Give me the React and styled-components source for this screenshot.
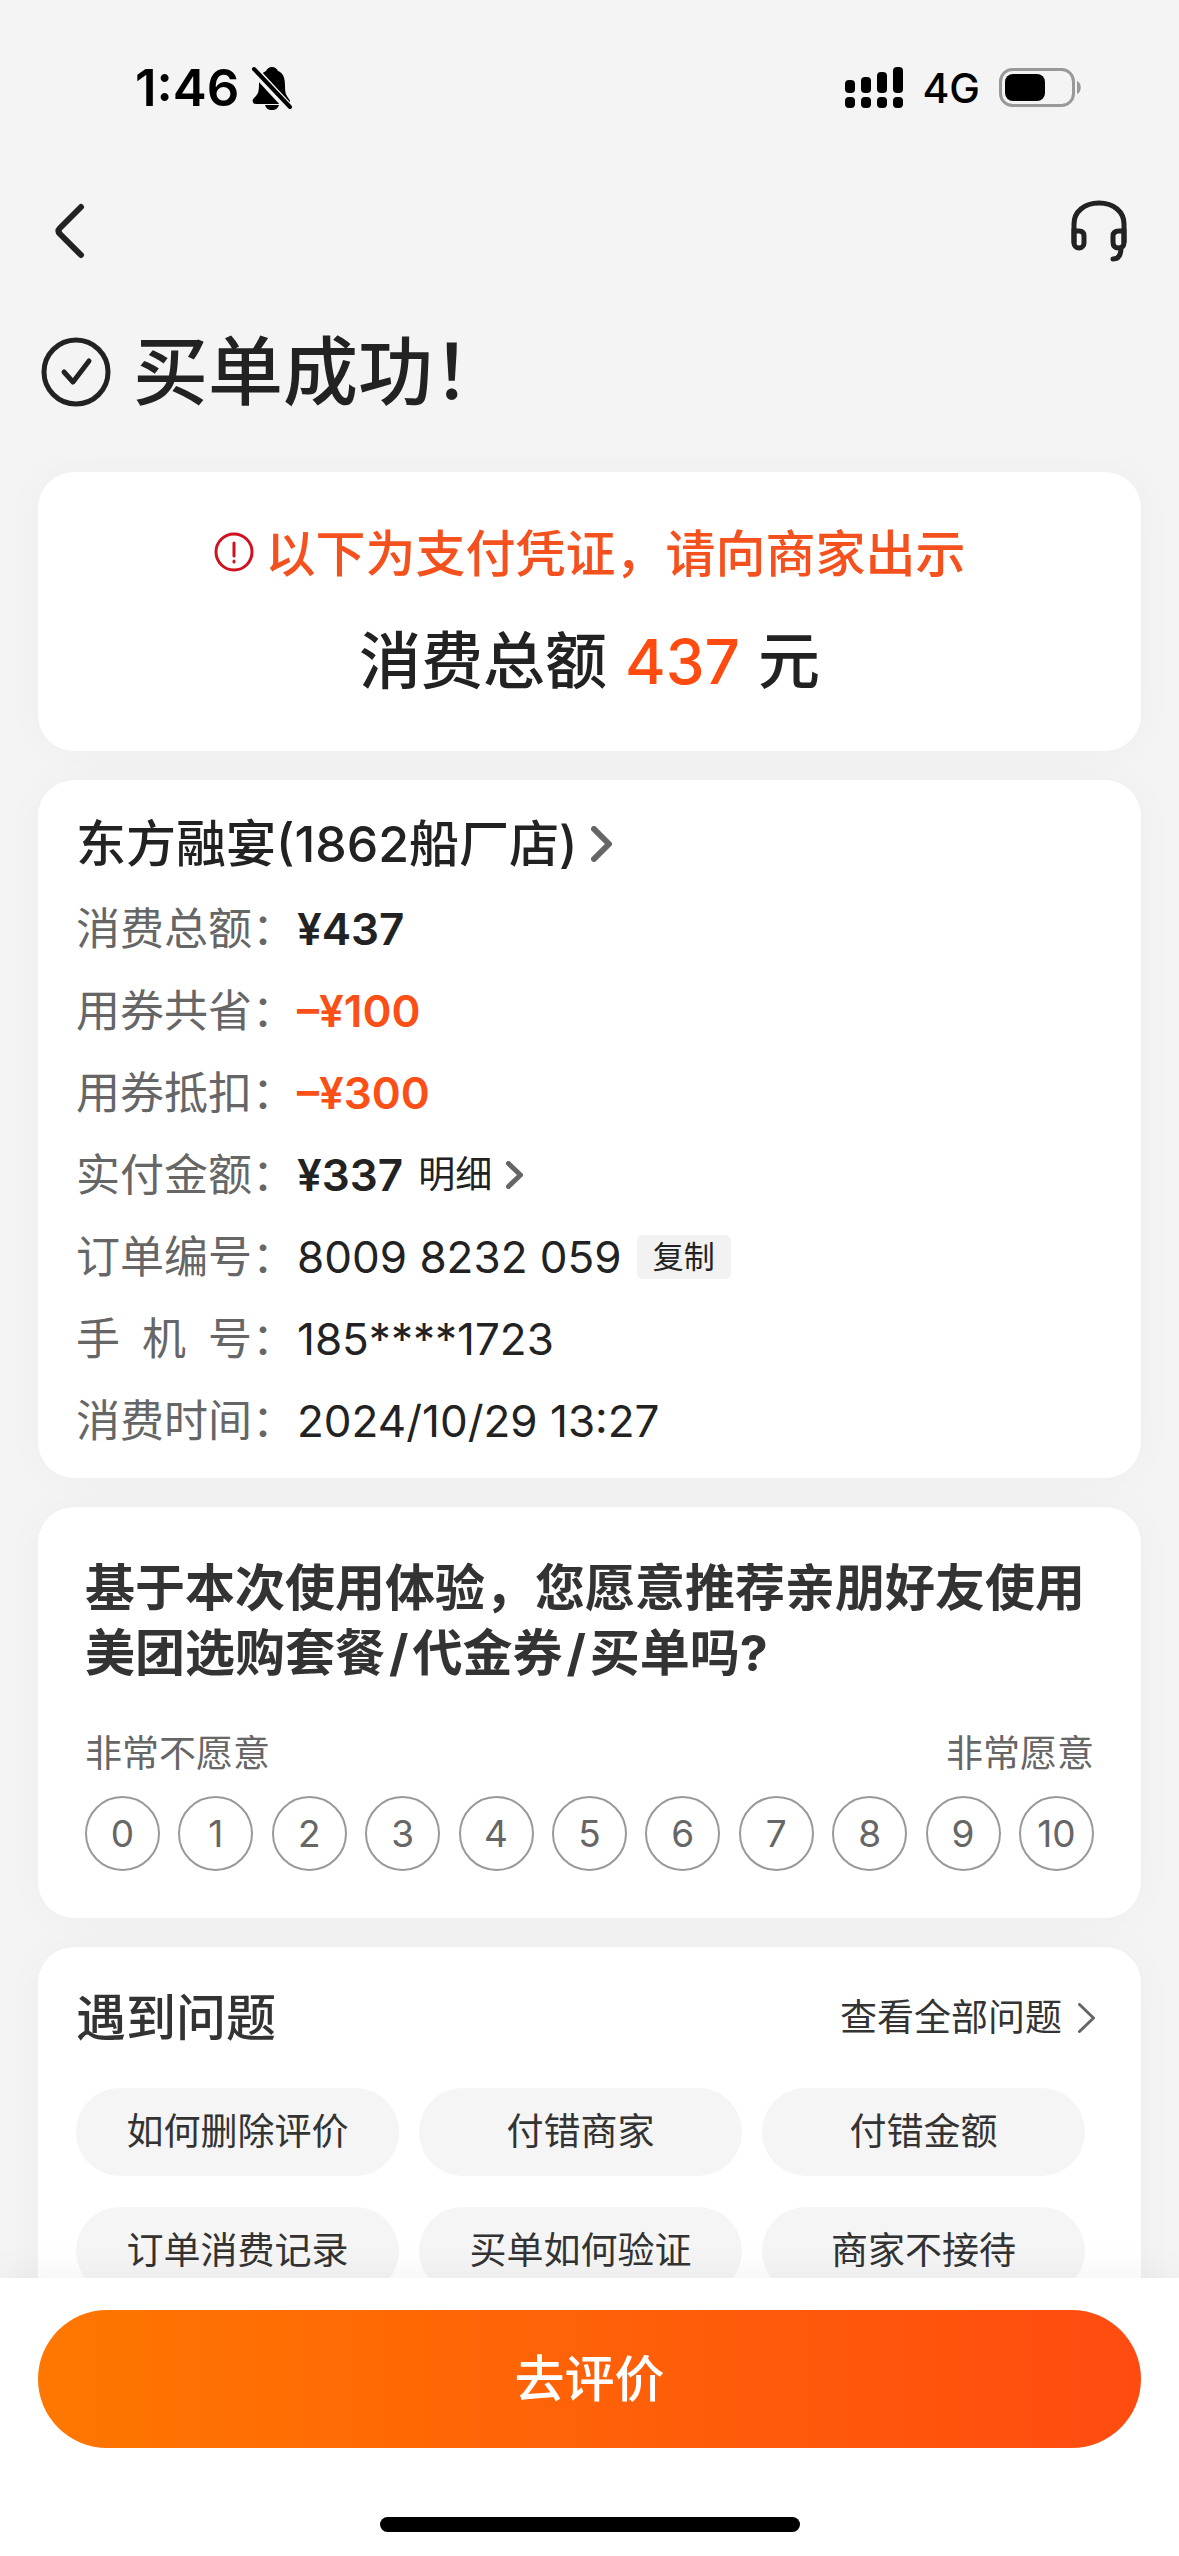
import React, { useState } from 'react';
import styled, { createGlobalStyle } from 'styled-components';

const GlobalStyle = createGlobalStyle`
    * {
        box-sizing: border-box;
    }
    body {
        margin: 0;
        background: #f4f4f4;
        color: #222;
        font-family: Inter, "Noto Sans CJK SC", sans-serif;
    }
    button {
        margin: 0;
        padding: 0;
        border: none;
        background: none;
        color: inherit;
        font-family: inherit;
        cursor: pointer;
    }
    a {
        color: inherit;
        text-decoration: none;
    }
`;

const Page = styled.div`
    display: flex;
    flex-direction: column;
    height: 100vh;
    overflow: hidden;
`;

const StatusBar = styled.header`
    flex: none;
    display: flex;
    align-items: center;
    justify-content: space-between;
    height: 176px;
    padding: 0 97px 0 135px;
    color: #000;
`;

const StatusGroup = styled.div`
    display: flex;
    align-items: center;
    gap: ${({ $gap }) => $gap}px;
`;

const Clock = styled.span`
    font-size: 51px;
    font-weight: 600;
    line-height: 60px;
`;

const Network = styled.span`
    font-size: 41px;
    font-weight: 500;
    line-height: 60px;
`;

const NavBar = styled.nav`
    flex: none;
    display: flex;
    align-items: center;
    justify-content: space-between;
    height: 110px;
    padding: 0 52px 0 46px;
`;

const IconButton = styled.button`
    display: flex;
    align-items: center;
    justify-content: center;
    height: 72px;
`;

const Result = styled.section`
    flex: none;
    display: flex;
    align-items: center;
    gap: 21px;
    height: 172px;
    padding: 0 40px;
`;

const ResultTitle = styled.h1`
    margin: 0;
    font-size: 75px;
    font-weight: 500;
    line-height: 100px;
`;

const Content = styled.main`
    flex: 1;
    min-height: 0;
    overflow: hidden;
    display: flex;
    flex-direction: column;
    gap: 29px;
    padding: 14px 38px 0;
`;

const Card = styled.section`
    flex: none;
    padding: ${({ $padding }) => $padding};
    border-radius: 36px;
    background: #fff;
    box-shadow: 0 0 40px rgba(0, 0, 0, 0.03);
`;

const Notice = styled.p`
    display: flex;
    align-items: center;
    justify-content: center;
    gap: 12px;
    margin: 0;
    color: #f4511e;
    font-size: 50px;
    font-weight: 500;
    line-height: 72px;
`;

const Total = styled.p`
    display: flex;
    align-items: center;
    justify-content: center;
    gap: 18px;
    margin: 28px 0 0;
    font-size: 62px;
    font-weight: 500;
    line-height: 88px;
    strong {
        color: #ff4b10;
        font-weight: 500;
    }
`;

const StoreLink = styled.a`
    display: flex;
    align-items: center;
    gap: 14px;
    font-size: 50px;
    font-weight: 500;
    line-height: 76px;
`;

const Details = styled.dl`
    display: grid;
    grid-template-columns: 221px 1fr;
    grid-auto-rows: 82px;
    align-items: center;
    margin: 6px 0 0;
    font-size: 44px;
    line-height: 60px;
`;

const Term = styled.dt`
    display: flex;
    color: #666;
`;

const TermText = styled.span`
    display: flex;
    justify-content: space-between;
    width: 176px;
`;

const Value = styled.dd`
    display: flex;
    align-items: center;
    gap: 15px;
    margin: 0;
    color: ${({ $accent }) => ($accent ? '#fa4f16' : '#222')};
    font-weight: ${({ $strong }) => ($strong ? 600 : 400)};
`;

const DetailLink = styled.a`
    display: flex;
    align-items: center;
    gap: 14px;
    font-size: 37px;
    font-weight: 400;
`;

const CopyButton = styled.button`
    height: 44px;
    padding: 0 16px;
    border-radius: 6px;
    background: #f2f2f2;
    font-size: 31px;
    line-height: 44px;
`;

const Question = styled.h2`
    margin: 0;
    color: #333;
    font-size: 50px;
    font-weight: 700;
    line-height: 65px;
`;

const Slash = styled.span`
    margin: 0 4px;
`;

const ScaleHint = styled.div`
    display: flex;
    justify-content: space-between;
    margin-top: 40px;
    color: #666;
    font-size: 37px;
    line-height: 56px;
`;

const Scale = styled.div`
    display: flex;
    justify-content: space-between;
    margin-top: 14px;
`;

const Score = styled.button`
    width: 75px;
    height: 75px;
    border: 2px solid ${({ $active }) => ($active ? '#ff4b10' : '#999')};
    border-radius: 50%;
    color: ${({ $active }) => ($active ? '#ff4b10' : '#666')};
    font-size: 37px;
    line-height: 44px;
`;

const HelpHeader = styled.div`
    display: flex;
    align-items: center;
    justify-content: space-between;
    padding: 0 8px 0 0;
    color: #333;
`;

const HelpTitle = styled.h2`
    margin: 0;
    font-size: 50px;
    font-weight: 500;
    line-height: 72px;
`;

const HelpLink = styled.a`
    display: flex;
    align-items: center;
    gap: 16px;
    font-size: 37px;
    line-height: 56px;
`;

const Chips = styled.div`
    display: grid;
    grid-template-columns: repeat(3, 1fr);
    gap: 31px 20px;
    margin-top: 34px;
    padding-right: 18px;
`;

const Chip = styled.button`
    height: 88px;
    border-radius: 44px;
    background: #f5f5f5;
    color: #333;
    font-size: 37px;
    line-height: 56px;
`;

const Footer = styled.footer`
    flex: none;
    display: flex;
    flex-direction: column;
    align-items: center;
    padding: 32px 38px 24px;
    background: #fff;
    box-shadow: 0 0 40px rgba(0, 0, 0, 0.06);
`;

const ReviewButton = styled.button`
    width: 100%;
    height: 138px;
    border-radius: 69px;
    background: linear-gradient(90deg, #ff7700, #ff4b10);
    color: #fff;
    font-size: 50px;
    font-weight: 500;
    line-height: 72px;
`;

const HomeIndicator = styled.div`
    width: 420px;
    height: 15px;
    margin-top: 69px;
    border-radius: 8px;
    background: #000;
`;

const ChevronIcon = ({ width, height, stroke = 6, color = '#666' }) => (
    <svg width={width} height={height} viewBox={`0 0 ${width} ${height}`} fill="none" stroke={color} strokeWidth={stroke} strokeLinecap="round" strokeLinejoin="round">
        <path d={`M${stroke / 2} ${stroke / 2}L${width - stroke / 2} ${height / 2}L${stroke / 2} ${height - stroke / 2}`} />
    </svg>
);

const BellOffIcon = () => (
    <svg width="40" height="44" viewBox="0 0 40 44">
        <path d="M20 1c-3 0-5 2-6 4C9 7 7 12 7 18c0 8-1 10-4 13-2 2-3 3-2 5 0 1 1 2 3 2h31c3 0 4-3 2-5-3-4-4-6-4-13 0-9-2-13-7-15-1-2-3-4-6-4zM13 39c1 3 3 5 7 5s6-2 7-5z" fill="#000" />
        <path d="M1 3L38 43" stroke="#f4f4f4" strokeWidth="9" />
        <path d="M2 3L38 41" stroke="#000" strokeWidth="4" strokeLinecap="round" />
    </svg>
);

const SignalIcon = () => (
    <svg width="58" height="42" viewBox="0 0 58 42">
        <rect x="0" y="13" width="10" height="13" rx="4" />
        <rect x="16" y="10" width="10" height="16" rx="4" />
        <rect x="32" y="5" width="10" height="21" rx="4" />
        <rect x="48" y="0" width="10" height="26" rx="4" />
        <rect x="0" y="30" width="10" height="11" rx="4" />
        <rect x="16" y="30" width="10" height="11" rx="4" />
        <rect x="32" y="30" width="10" height="11" rx="4" />
        <rect x="48" y="30" width="10" height="11" rx="4" />
    </svg>
);

const BatteryIcon = () => (
    <svg width="83" height="40" viewBox="0 0 83 40">
        <rect x="1.5" y="1.5" width="73" height="36" rx="12" fill="none" stroke="#999" strokeWidth="3" />
        <rect x="6" y="6" width="40" height="27" rx="8" />
        <path d="M78 13c5 2 5 11 0 13z" fill="#999" />
    </svg>
);

const BackIcon = () => (
    <svg width="44" height="56" viewBox="0 0 44 56" fill="none" stroke="#222" strokeWidth="6" strokeLinecap="round" strokeLinejoin="round">
        <path d="M35 4L14 25Q11 28 14 31L35 52" />
    </svg>
);

const HeadsetIcon = () => (
    <svg width="56" height="62" viewBox="0 0 56 62" fill="none" stroke="#222" strokeWidth="5" strokeLinecap="round">
        <path d="M3 42V24C3 12 13 3 28 3S53 12 53 24V42" />
        <path d="M3 31H8Q13 31 13 36V43A5 5 0 0 1 3 43Z" />
        <path d="M53 31H48Q42 31 42 36V42Q42 48 47.500 48Q53 48 53 42Z" />
        <path d="M50 48C50 56 47 59 42 59" />
    </svg>
);

const SuccessIcon = () => (
    <svg width="72" height="72" viewBox="0 0 72 72" fill="none" stroke="#222" strokeWidth="5" strokeLinecap="round" strokeLinejoin="round">
        <circle cx="36" cy="36" r="32" />
        <path d="M24 36L33 46L49 25" />
    </svg>
);

const AlertIcon = () => (
    <svg width="40" height="44" viewBox="0 0 40 44" fill="none" stroke="#d0121f" strokeWidth="3" strokeLinecap="round">
        <circle cx="20" cy="20" r="18" />
        <path d="M20 11V24M20 29V30" />
    </svg>
);

const details = [
    { label: '消费总额', value: '¥437', strong: true },
    { label: '用券共省', value: '–¥100', strong: true, accent: true },
    { label: '用券抵扣', value: '–¥300', strong: true, accent: true },
    { label: '实付金额', value: '¥337', strong: true, link: '明细' },
    { label: '订单编号', value: '8009 8232 059', copy: true },
    { label: '手机号', value: '185****1723' },
    { label: '消费时间', value: '2024/10/29 13:27' },
];

const scores = [0, 1, 2, 3, 4, 5, 6, 7, 8, 9, 10];

const problems = ['如何删除评价', '付错商家', '付错金额', '订单消费记录', '买单如何验证', '商家不接待'];

const App = () => {
    const [score, setScore] = useState(null);

    return (
        <Page>
            <GlobalStyle />
            <StatusBar>
                <StatusGroup $gap={13}>
                    <Clock>1:46</Clock>
                    <BellOffIcon />
                </StatusGroup>
                <StatusGroup $gap={19}>
                    <SignalIcon />
                    <Network>4G</Network>
                    <BatteryIcon />
                </StatusGroup>
            </StatusBar>
            <NavBar>
                <IconButton aria-label="返回"><BackIcon /></IconButton>
                <IconButton aria-label="客服"><HeadsetIcon /></IconButton>
            </NavBar>
            <Result>
                <SuccessIcon />
                <ResultTitle>买单成功！</ResultTitle>
            </Result>
            <Content>
                <Card $padding="46px 40px 45px">
                    <Notice><AlertIcon />以下为支付凭证，请向商家出示</Notice>
                    <Total>消费总额<strong>437</strong>元</Total>
                </Card>
                <Card $padding="26px 38px 16px">
                    <StoreLink href="#store">
                        东方融宴(1862船厂店)
                        <ChevronIcon width={21} height={36} />
                    </StoreLink>
                    <Details>
                        {details.map((item) => (
                            <React.Fragment key={item.label}>
                                <Term>
                                    <TermText>{item.label.split('').map((char) => <span key={char}>{char}</span>)}</TermText>：
                                </Term>
                                <Value $strong={item.strong} $accent={item.accent}>
                                    {item.value}
                                    {item.link && (
                                        <DetailLink href="#detail">
                                            {item.link}
                                            <ChevronIcon width={17} height={28} stroke={5} />
                                        </DetailLink>
                                    )}
                                    {item.copy && <CopyButton>复制</CopyButton>}
                                </Value>
                            </React.Fragment>
                        ))}
                    </Details>
                </Card>
                <Card $padding="49px 47px 47px">
                    <Question>
                        基于本次使用体验，您愿意推荐亲朋好友使用<wbr />美团选购套餐<Slash>/</Slash>代金券<Slash>/</Slash>买单吗?
                    </Question>
                    <ScaleHint>
                        <span>非常不愿意</span>
                        <span>非常愿意</span>
                    </ScaleHint>
                    <Scale>
                        {scores.map((n) => (
                            <Score key={n} $active={score === n} onClick={() => setScore(n)}>{n}</Score>
                        ))}
                    </Scale>
                </Card>
                <Card $padding="35px 38px 40px">
                    <HelpHeader>
                        <HelpTitle>遇到问题</HelpTitle>
                        <HelpLink href="#help">
                            查看全部问题
                            <ChevronIcon width={17} height={30} stroke={3} />
                        </HelpLink>
                    </HelpHeader>
                    <Chips>
                        {problems.map((text) => <Chip key={text}>{text}</Chip>)}
                    </Chips>
                </Card>
            </Content>
            <Footer>
                <ReviewButton>去评价</ReviewButton>
                <HomeIndicator />
            </Footer>
        </Page>
    );
};

export default App;
